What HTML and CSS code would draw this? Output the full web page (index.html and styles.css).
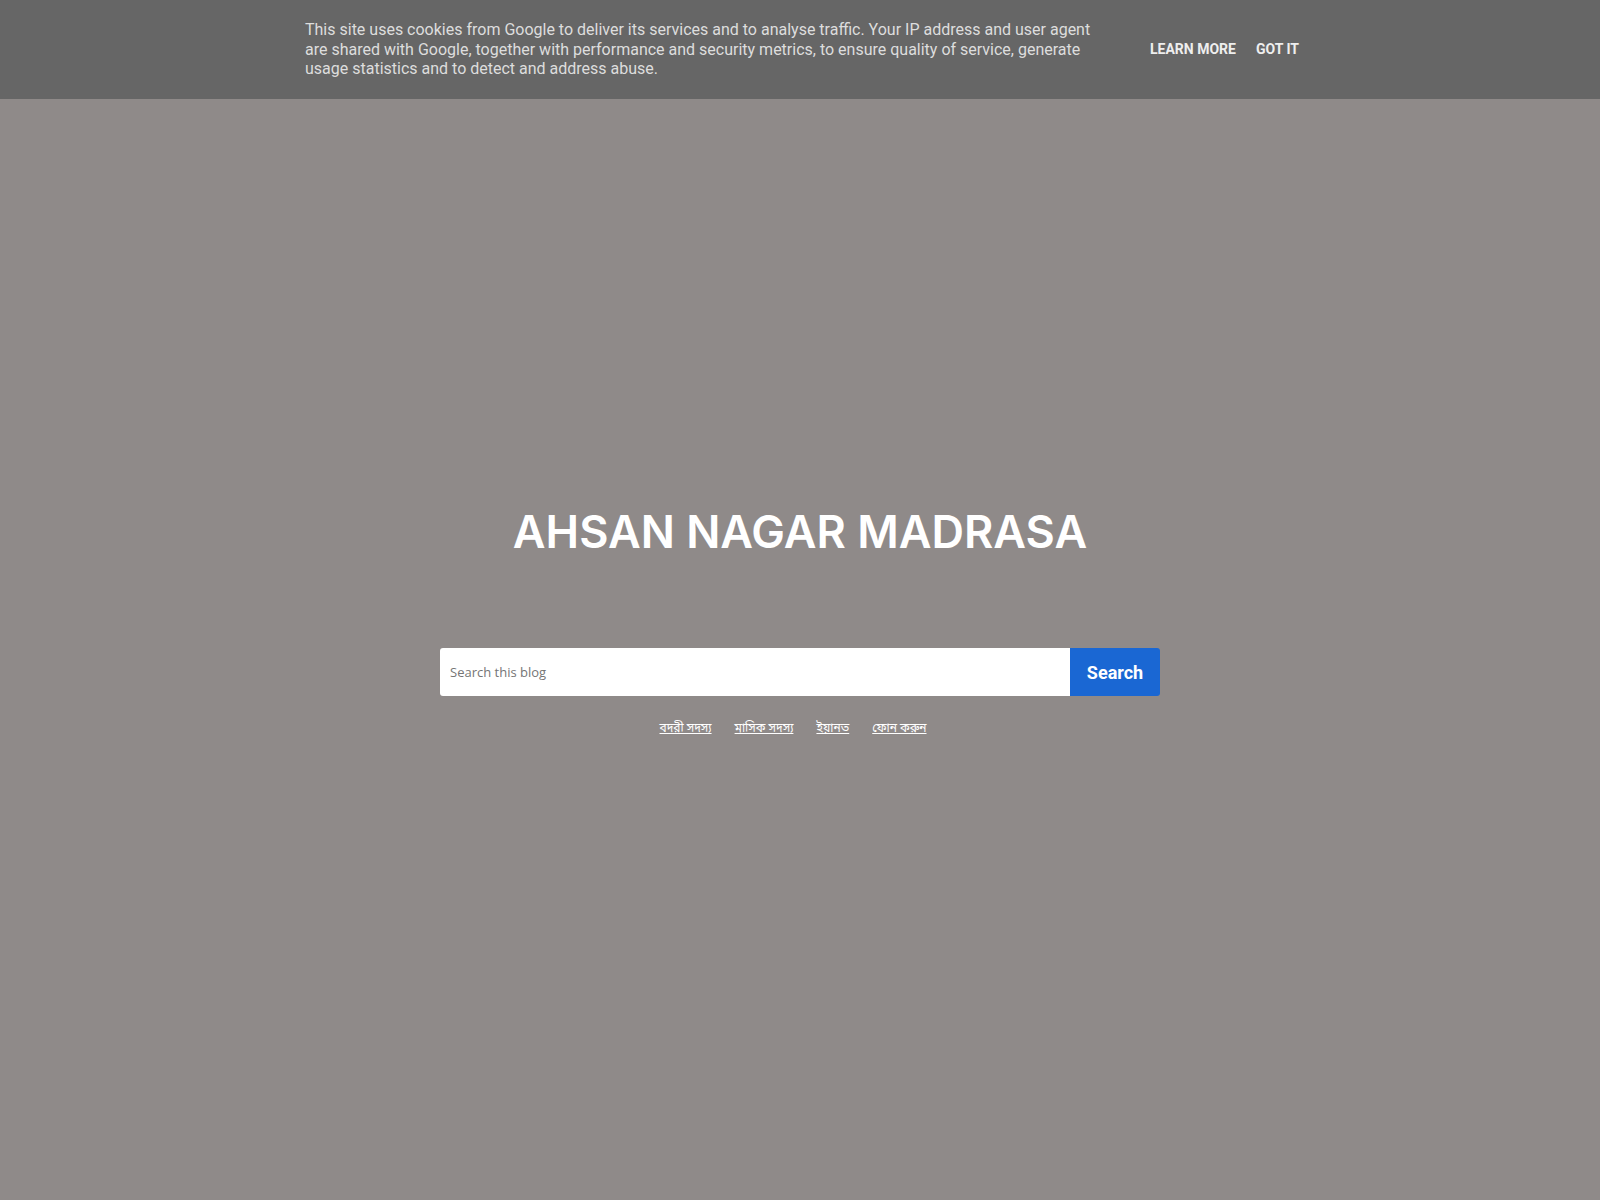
FILE: index.html
```html
<!DOCTYPE html>
<html lang="en">
<head>
<meta charset="utf-8">
<title>AHSAN NAGAR MADRASA</title>
<link rel="stylesheet" href="styles.css">
</head>
<body>
<div class="cookie-bar">
  <div class="cookie-inner">
    <span class="cookie-text">This site uses cookies from Google to deliver its services and to analyse traffic. Your IP address and user agent are shared with Google, together with performance and security metrics, to ensure quality of service, generate usage statistics and to detect and address abuse.</span>
    <span class="cookie-buttons">
      <a class="cookie-btn" href="#">Learn more</a>
      <a class="cookie-btn" href="#">Got it</a>
    </span>
  </div>
</div>
<main class="page">
  <header class="masthead">
    <h1 class="blog-title">AHSAN NAGAR MADRASA</h1>
    <form class="search-form">
      <input class="search-input" type="text" placeholder="Search this blog">
      <button class="search-btn" type="button">Search</button>
    </form>
    <nav class="links">
      <a href="#">বদরী সদস্য</a>
      <a href="#">মাসিক সদস্য</a>
      <a href="#">ইয়ানত</a>
      <a href="#">ফোন করুন</a>
    </nav>
  </header>
</main>
</body>
</html>
```
FILE: styles.css
```css
html, body {
  margin: 0;
  padding: 0;
}
body {
  background: #8f8a89;
  min-height: 1200px;
  font-family: "Open Sans", "Noto Sans", sans-serif;
}
.cookie-bar {
  position: fixed;
  top: 0;
  left: 0;
  right: 0;
  height: 99px;
  background: #666666;
  z-index: 10;
}
.cookie-inner {
  width: 1000px;
  margin: 0 auto;
  display: flex;
  align-items: center;
  height: 99px;
  box-sizing: border-box;
  padding-left: 5px;
}
.cookie-text {
  width: 800px;
  font-family: Roboto, "Liberation Sans", sans-serif;
  font-size: 16px;
  line-height: 19.4px;
  color: #dddddd;
}
.cookie-buttons {
  display: flex;
  gap: 20px;
  margin-left: 45px;
  margin-bottom: 2px;
}
.cookie-btn {
  font-family: Roboto, "Liberation Sans", sans-serif;
  font-weight: 700;
  font-size: 14px;
  text-transform: uppercase;
  color: #eeeeee;
  text-decoration: none;
}
.page {
  padding-top: 504px;
}
.masthead {
  display: flex;
  flex-direction: column;
  align-items: center;
}
.blog-title {
  margin: 0;
  font-family: Inter, "Open Sans", sans-serif;
  font-weight: 600;
  font-size: 45px;
  line-height: 56px;
  color: #ffffff;
}
.search-form {
  margin-top: 88px;
  display: flex;
  width: 720px;
  height: 48px;
}
.search-input {
  flex: 1;
  border: 0;
  margin: 0;
  padding: 0 10px;
  border-radius: 3px 0 0 3px;
  background: #ffffff;
  font-family: "Open Sans", sans-serif;
  font-size: 13px;
  color: #333;
  outline: none;
}
.search-input::placeholder {
  color: #757575;
}
.search-btn {
  width: 90px;
  border: 0;
  margin: 0;
  padding: 0;
  border-radius: 0 3px 3px 0;
  background: #1a67d3;
  color: #ffffff;
  font-family: Roboto, "Liberation Sans", sans-serif;
  font-weight: 700;
  font-size: 18px;
}
.links {
  margin-top: 24px;
  padding-right: 14px;
  display: flex;
  gap: 23px;
}
.links a {
  font-family: "Noto Sans Bengali", "Noto Sans", sans-serif;
  font-size: 12px;
  line-height: 18px;
  color: #ffffff;
  text-decoration: underline;
}
```
